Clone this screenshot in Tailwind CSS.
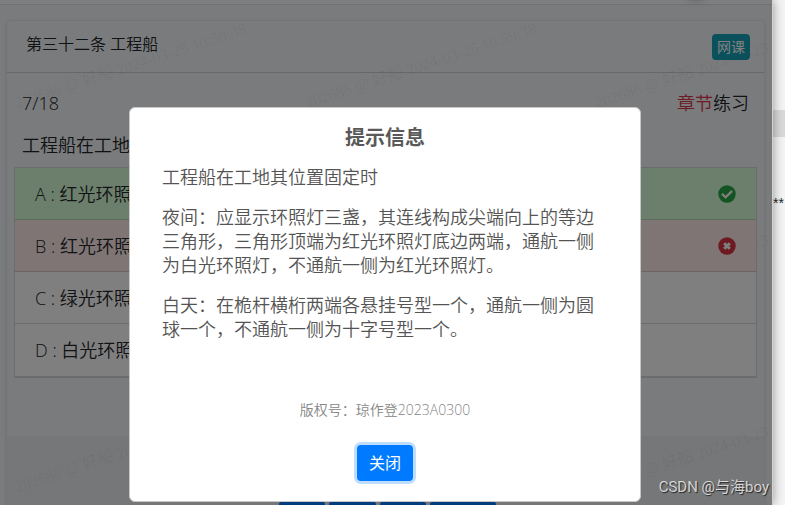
<!DOCTYPE html>
<html lang="zh-CN">
<head>
  <meta charset="UTF-8" />
  <meta name="viewport" content="width=device-width, initial-scale=1.0" />
  <title>章节练习</title>
  <script src="https://cdn.jsdelivr.net/npm/@tailwindcss/browser@4"></script>
</head>
<body class="h-screen flex overflow-hidden bg-[#f4f4f4] font-['Open_Sans','Noto_Sans_CJK_SC',sans-serif] text-[#212529]">
  <!-- Practice page -->
  <div class="relative z-10 flex-1 min-w-0 overflow-hidden bg-[#f4f6f9] border-r border-[#d0d2d4] shadow-[0_0_10px_rgba(0,0,0,0.4)]">
    <nav class="relative h-[5px] bg-white border-b border-[#dee2e6]">
      <button type="button" aria-label="返回顶部" class="absolute right-14 -top-10 size-10 rounded-full bg-white shadow-md"></button>
    </nav>

    <!-- Watermarks -->
    <div id="marks" aria-hidden="true" class="absolute inset-0 pointer-events-none"></div>

    <main class="mt-[15px] ml-1.5 mr-[7px] rounded border border-black/5 shadow-sm">
      <header class="flex items-center justify-between h-[52px] pl-[19px] pr-3.5 border-b border-black/15">
        <h1 class="pb-1.5 text-base font-[350]">第三十二条 工程船</h1>
        <a href="#" class="rounded-sm bg-[#17a2b8] px-[5px] py-[3px] text-sm leading-5 text-white">网课</a>
      </header>

      <section class="px-[7px] pt-4 pb-[58px] text-lg leading-7 font-[350]">
        <div class="flex justify-between px-2">
          <span>7/18</span>
          <span><span class="text-[#dc3545]">章节</span>练习</span>
        </div>
        <p class="px-2 mt-3.5">工程船在工地其位置固定时</p>
        <ul class="relative mt-2 border border-black/15 border-b-2 bg-white">
          <li class="flex items-center justify-between h-[52px] px-5 border-b border-black/15 bg-[#d8ffd8]">
            A : 红光环照灯三盏
            <svg class="size-[18px]" viewBox="0 0 512 512" fill="#28a745"><circle cx="256" cy="256" r="248"/><path fill="white" d="M227 387l184-184c7-7 7-17 0-23l-22-22c-6-7-17-7-23 0L216 308l-70-70c-6-6-17-6-23 0l-22 23c-7 6-7 16 0 22l104 104c6 7 16 7 22 0z"/></svg>
          </li>
          <li class="flex items-center justify-between h-[52px] px-5 border-b border-black/15 bg-[#ffebeb]">
            B : 红光环照灯两盏
            <svg class="size-[18px]" viewBox="0 0 512 512"><circle cx="256" cy="256" r="248" fill="#dc3545"/><path d="M176 176L336 336M336 176L176 336" stroke="white" stroke-width="84"/></svg>
          </li>
          <li class="flex items-center h-[52px] px-5 border-b border-black/15">C : 绿光环照灯三盏</li>
          <li class="flex items-center h-[52px] px-5">D : 白光环照灯三盏</li>
        </ul>
      </section>

      <footer class="h-40 bg-black/3 pt-[66px]">
        <div class="flex justify-center gap-1 pl-1 text-base leading-6 text-white">
          <button type="button" class="rounded-xs bg-[#007bff] px-[7px]">收藏</button>
          <button type="button" class="rounded-xs bg-[#007bff] px-[7px]">解析</button>
          <button type="button" class="rounded-xs bg-[#007bff] px-[7px]">提示</button>
          <button type="button" class="rounded-xs bg-[#007bff] px-[9px]">下一题</button>
        </div>
      </footer>
    </main>

    <!-- Dialog -->
    <div class="absolute inset-0 flex items-start justify-center bg-black/50 pt-[107px] pr-0.5">
      <div role="dialog" aria-modal="true" aria-labelledby="tip-title" class="w-full max-w-[512px] rounded-md border border-[#c8c8c8] bg-white px-8 pt-3.5 pb-5 text-[#545454]">
        <h2 id="tip-title" class="text-center text-xl leading-8 font-bold text-[#595959]">提示信息</h2>
        <div class="mt-[11px] space-y-4 text-lg leading-6 font-[350]">
          <p>工程船在工地其位置固定时</p>
          <p>夜间：应显示环照灯三盏，其连线构成尖端向上的等边三角形，三角形顶端为红光环照灯底边两端，通航一侧为白光环照灯，不通航一侧为红光环照灯。</p>
          <p>白天：在桅杆横桁两端各悬挂号型一个，通航一侧为圆球一个，不通航一侧为十字号型一个。</p>
        </div>
        <p class="mt-[59px] text-center text-sm leading-5 font-[350] text-[#868686]">版权号：琼作登2023A0300</p>
        <div class="mt-[25px] flex justify-center">
          <button type="button" class="h-9 rounded bg-[#007bff] px-3 text-base text-white ring-3 ring-[#bfdeff]">关闭</button>
        </div>
      </div>
    </div>
  </div>

  <!-- Window behind -->
  <aside class="w-3 flex flex-col overflow-hidden pt-[110px]">
    <div class="h-[27px] bg-[#d9d9d9]"></div>
    <span class="mt-[58px] text-sm leading-4 font-['Liberation_Sans',sans-serif]">**</span>
  </aside>

  <div class="absolute z-20 right-4 bottom-2 text-[15px] leading-5 text-white/75 [text-shadow:1px_1px_1px_#000000b0] font-['Roboto','Noto_Sans_CJK_SC',sans-serif]">CSDN @与海boy</div>

  <script>
    const marks = document.getElementById("marks");
    for (let row = 0; row < 3; row++) {
      for (let col = 0; col < 3; col++) {
        const mark = document.createElement("span");
        mark.className = "absolute origin-bottom-left -rotate-18 whitespace-nowrap text-base leading-4 text-black/6 font-['Liberation_Serif','Noto_Sans_CJK_SC',serif]";
        mark.style.left = 18 + col * 290 + "px";
        mark.style.top = 95 + row * 192 + "px";
        mark.textContent = "202686 @ 好船 2024-03-25 10:59:38";
        marks.appendChild(mark);
      }
    }
  </script>
</body>
</html>
